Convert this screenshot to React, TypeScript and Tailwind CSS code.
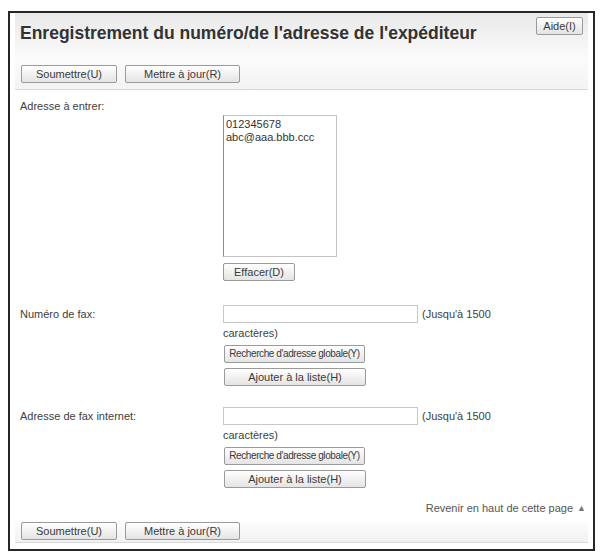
import React from 'react';

type BtnProps = { label: string; className?: string };

const Bouton = ({ label, className = '' }: BtnProps) => (
  <button
    type="button"
    className={`shrink-0 h-[18px] px-0 whitespace-nowrap overflow-hidden border border-[#9a9a9a] rounded-[2px] bg-gradient-to-b from-white to-[#e4e4e4] leading-none text-[#3a3a3a] ${className}`}
  >
    {label}
  </button>
);

const BarreBoutons = () => (
  <div className="flex items-center gap-[8px] pl-[6px]">
    <Bouton label="Soumettre(U)" className="w-[96px] text-[11px]" />
    <Bouton label="Mettre à jour(R)" className="w-[115px] text-[11px]" />
  </div>
);

const ChampFax = () => (
  <div className="w-[300px]">
    <div className="flex items-center">
      <input type="text" className="w-[195px] h-[18px] border border-[#c8c8c8] bg-white outline-none" />
      <span className="ml-[4px] leading-[14px]">(Jusqu'à 1500</span>
    </div>
    <div className="mt-[3px] leading-[14px]">caractères)</div>
    <div>
      <Bouton
        label="Recherche d'adresse globale(Y)"
        className="mt-[5px] ml-px w-[141px] h-[17px] text-[10px] tracking-[-0.4px]"
      />
    </div>
    <div>
      <Bouton label="Ajouter à la liste(H)" className="mt-[5px] ml-px w-[142px] text-[11px]" />
    </div>
  </div>
);

export default function App() {
  return (
    <div
      className="min-h-[556px] bg-white pt-[11px] pl-[8px] text-[11px] text-[#404040]"
      style={{ fontFamily: '"Liberation Sans", Arial, sans-serif' }}
    >
      <div className="w-[587px] h-[540px] border-2 border-[#262626] px-[5px] flex flex-col">
        {/* en-tête */}
        <div className="shrink-0 relative h-[47px] bg-gradient-to-b from-[#e9e9e9] to-[#fbfbfb] pl-[5px] pt-[10px]">
          <h1 className="text-[17.5px] leading-[20px] font-bold text-[#333]">
            Enregistrement du numéro/de l'adresse de l'expéditeur
          </h1>
          <Bouton label="Aide(I)" className="absolute right-[5px] top-[4px] w-[47px] h-[16px] text-[11px]" />
        </div>
        <div className="shrink-0 h-[30px] pt-[5px] border-b border-[#d9d9d9] bg-gradient-to-b from-[#fbfbfb] to-[#f3f3f3]">
          <BarreBoutons />
        </div>

        {/* formulaire */}
        <div className="shrink-0 pl-[5px] pt-[9px] grid grid-cols-[203px_1fr]">
          <div className="leading-[14px]">Adresse à entrer:</div>
          <div className="pt-[16px]">
            <div className="w-[114px] h-[142px] border border-[#c4c4c4] border-l-[#8c8c8c] bg-white px-[2px] pt-[2px] leading-[13px] text-[#333]">
              <div>012345678</div>
              <div>abc@aaa.bbb.ccc</div>
            </div>
            <Bouton label="Effacer(D)" className="mt-[6px] w-[72px] text-[11px]" />
          </div>

          <div className="mt-[24px] pt-[2px] leading-[14px]">Numéro de fax:</div>
          <div className="mt-[24px]">
            <ChampFax />
          </div>

          <div className="mt-[21px] pt-[2px] leading-[14px]">Adresse de fax internet:</div>
          <div className="mt-[21px]">
            <ChampFax />
          </div>
        </div>

        <div className="shrink-0 mt-[13px] pr-[2px] flex justify-end items-center gap-[4px] leading-[14px] text-[#555]">
          <span>Revenir en haut de cette page</span>
          <span className="text-[9px] text-[#777]">▲</span>
        </div>

        <div className="shrink-0 mt-[3px] h-[25px] pt-[4px] border-b border-[#d9d9d9] bg-gradient-to-b from-white to-[#f1f1f1]">
          <BarreBoutons />
        </div>
      </div>
    </div>
  );
}
